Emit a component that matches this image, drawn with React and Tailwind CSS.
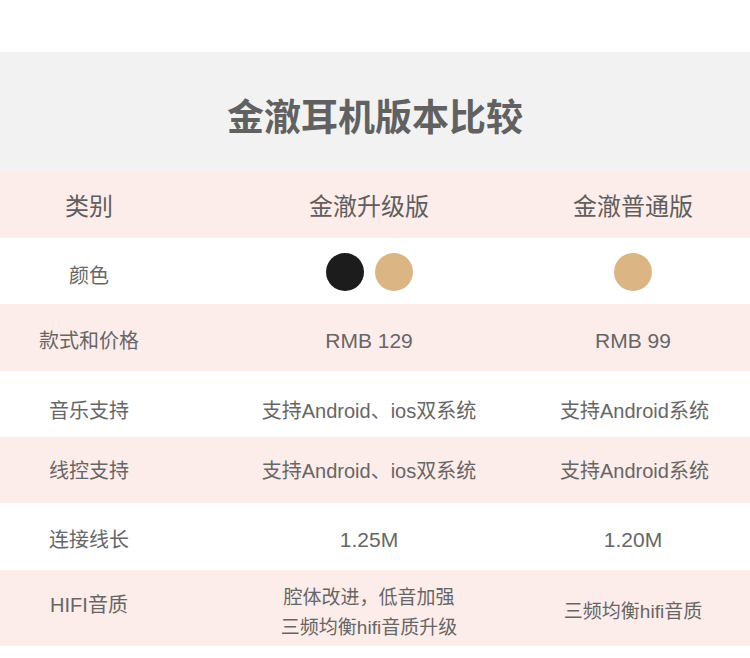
export default function App() {
  const font = { fontFamily: '"Liberation Sans", "Noto Sans CJK SC", sans-serif' };
  const Row = ({ pink, h = "h-[66px]", children }) => (
    <div className={`grid grid-cols-[178px_382px_146px_44px] items-center text-center ${h} ${pink ? "bg-[#fdedea]" : "bg-white"}`}>
      {children}
      <div />
    </div>
  );
  return (
    <div className="w-[750px] h-[658px] bg-white text-[#666666]" style={font}>
      <div className="h-[52px]" />
      <div className="h-[120px] bg-[#f2f2f2] flex items-center justify-center pt-[12px]">
        <div className="text-[37px] font-semibold text-[#616161] leading-none">金澈耳机版本比较</div>
      </div>
      <Row pink>
        <div className="text-[24px] text-[#5e5e5e] pt-[4px]">类别</div>
        <div className="text-[24px] text-[#5e5e5e] pt-[4px]">金澈升级版</div>
        <div className="text-[24px] text-[#5e5e5e] pt-[4px]">金澈普通版</div>
      </Row>
      <Row>
        <div className="text-[20px] pt-[10px]">颜色</div>
        <div className="flex justify-center gap-[11px] pt-[2px]">
          <div className="w-[38px] h-[38px] rounded-full bg-[#1c1c1c]" />
          <div className="w-[38px] h-[38px] rounded-full bg-[#dbb583]" />
        </div>
        <div className="flex justify-center pt-[2px]">
          <div className="w-[38px] h-[38px] rounded-full bg-[#dbb583]" />
        </div>
      </Row>
      <Row pink h="h-[67px]">
        <div className="text-[20px] pt-[6px]">款式和价格</div>
        <div className="text-[21px] pt-[6px]">RMB 129</div>
        <div className="text-[21px] pt-[6px]">RMB 99</div>
      </Row>
      <Row>
        <div className="text-[20px] pt-[14px]">音乐支持</div>
        <div className="text-[20px] pt-[14px]">支持Android、ios双系统</div>
        <div className="text-[20px] pt-[14px] whitespace-nowrap">支持Android系统</div>
      </Row>
      <Row pink>
        <div className="text-[20px] pt-[2px]">线控支持</div>
        <div className="text-[20px] pt-[2px]">支持Android、ios双系统</div>
        <div className="text-[20px] pt-[2px] whitespace-nowrap">支持Android系统</div>
      </Row>
      <Row h="h-[67px]">
        <div className="text-[20px] pt-[6px]">连接线长</div>
        <div className="text-[21px] pt-[6px]">1.25M</div>
        <div className="text-[21px] pt-[6px]">1.20M</div>
      </Row>
      <Row pink h="h-[76px]">
        <div className="text-[20px] pb-[6px]">HIFI音质</div>
        <div className="text-[19px] leading-[30px] pt-[10px]">
          <div>腔体改进，低音加强</div>
          <div>三频均衡hifi音质升级</div>
        </div>
        <div className="text-[19px] whitespace-nowrap pt-[8px]">三频均衡hifi音质</div>
      </Row>
    </div>
  );
}
